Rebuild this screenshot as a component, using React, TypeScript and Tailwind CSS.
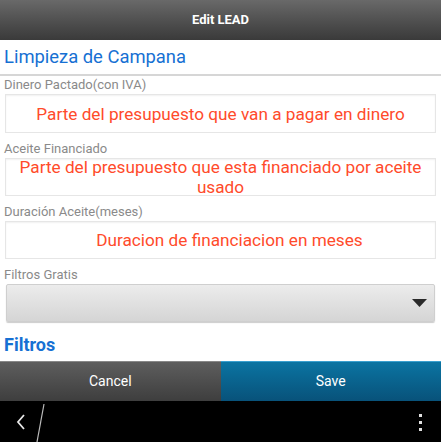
import React from "react";

const font = { fontFamily: "Roboto, 'Noto Sans', sans-serif" };

function Label({ text, first }: { text: string; first?: boolean }) {
  return (
    <div className={`${first ? "" : "mt-[7px]"} h-[18px] pl-[4px] text-[13px] leading-[18px] text-[#8a8a8a]`}>{text}</div>
  );
}

function Box({ text, h, extra }: { text: string; h: string; extra?: string }) {
  return (
    <div className={`mx-[5px] ${h} border border-[#e6e6e6] bg-white shadow-[inset_0_1px_2px_rgba(0,0,0,0.06)] flex items-center justify-center`}>
      <div className={`text-center text-[17.2px] leading-[20px] text-[#ff4b2b] px-[6px] ${extra ?? ""}`}>{text}</div>
    </div>
  );
}

export default function App() {
  return (
    <div className="w-[441px] h-[442px] flex flex-col bg-white overflow-hidden" style={font}>
      <div className="h-[40px] shrink-0 bg-gradient-to-b from-[#696969] to-[#3a3a3a] flex items-center justify-center">
        <span className="text-white font-bold text-[13px]">Edit LEAD</span>
      </div>
      <div className="h-[36px] shrink-0 border-b-2 border-[#d6d6d6] flex items-center pl-[4px]">
        <span className="text-[18.4px] text-[#1670d3]">Limpieza de Campana</span>
      </div>
      <div className="flex-1 flex flex-col">
        <Label first text="Dinero Pactado(con IVA)" />
        <Box h="h-[39px]" text="Parte del presupuesto que van a pagar en dinero" />
        <Label text="Aceite Financiado" />
        <Box h="h-[38px]" text="Parte del presupuesto que esta financiado por aceite usado" />
        <Label text="Duración Aceite(meses)" />
        <Box h="h-[38px]" extra="pl-[24px]" text="Duracion de financiacion en meses" />
        <Label text="Filtros Gratis" />
        <div className="mx-[6px] h-[38px] rounded-[2px] border border-[#cfcfcf] bg-gradient-to-b from-[#ececec] to-[#d5d5d5] shadow-[0_1px_1px_rgba(0,0,0,0.2)] flex items-center justify-end pr-[7px]">
          <svg width="15" height="8" viewBox="0 0 15 8"><polygon points="0,0 15,0 7.5,8" fill="#2a2a2a" /></svg>
        </div>
        <div className="mt-[11px] pl-[4px] text-[18px] font-bold text-[#1670d3] leading-[24px]">Filtros</div>
      </div>
      <div className="h-[40px] shrink-0 flex">
        <div className="flex-1 bg-gradient-to-b from-[#5e5e5e] to-[#3e3e3e] border-t border-[#888] flex items-center justify-center text-[14px] text-white">Cancel</div>
        <div className="flex-1 bg-gradient-to-b from-[#0b74a2] to-[#08527a] border-t border-[#3aa0cf] flex items-center justify-center text-[14px] text-white">Save</div>
      </div>
      <div className="h-[41px] shrink-0 bg-black relative">
        <svg className="absolute left-[16px] top-[13px]" width="10" height="16" viewBox="0 0 10 16">
          <polyline points="8,1 2,8 8,15" fill="none" stroke="#e8e8e8" strokeWidth="1.8" />
        </svg>
        <svg className="absolute left-[34px] top-[2px]" width="12" height="40" viewBox="0 0 12 40">
          <line x1="10" y1="1" x2="3" y2="39" stroke="#bbbbbb" strokeWidth="1.2" />
        </svg>
        <div className="absolute left-[419px] top-[13px] flex flex-col gap-[4px]">
          <div className="w-[3px] h-[3px] bg-[#e0e0e0]" />
          <div className="w-[3px] h-[3px] bg-[#e0e0e0]" />
          <div className="w-[3px] h-[3px] bg-[#e0e0e0]" />
        </div>
      </div>
    </div>
  );
}
